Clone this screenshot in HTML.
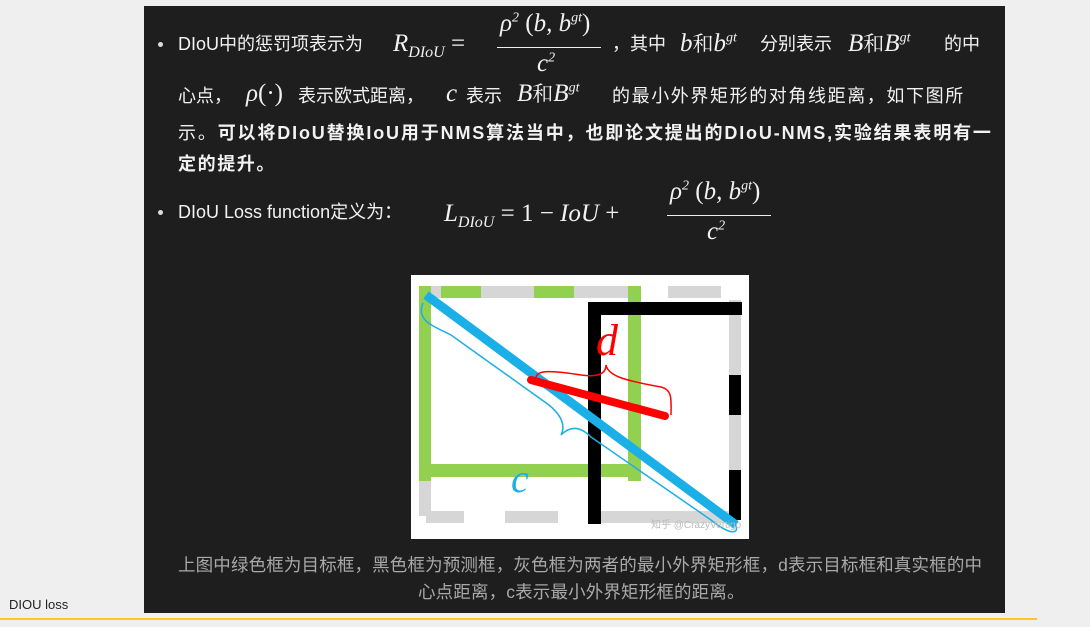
<!DOCTYPE html>
<html><head><meta charset="utf-8"><style>
body{margin:0;width:1090px;height:627px;background:#efefef;position:relative;overflow:hidden;font-family:"Liberation Sans","Noto Sans CJK SC",sans-serif;}
#p{position:absolute;left:144px;top:6px;width:861px;height:607px;background:#1e1e1e;}
.t{position:absolute;color:#f2f2f2;font-size:18px;white-space:nowrap;line-height:20px;}
.m{font-family:"Liberation Serif",serif;font-style:italic;font-size:25px;color:#f2f2f2;position:absolute;white-space:nowrap;}
.n{font-style:normal;}
.b{font-weight:bold;}
.dot{position:absolute;width:5px;height:5px;border-radius:50%;background:#ddd;}
.hr{position:absolute;height:1px;background:#eee;}
</style></head><body>
<div id="p"></div>
<div class="dot" style="left:158px;top:42px"></div>
<div class="t" style="left:178px;top:34px">DIoU中的惩罚项表示为</div>
<div class="m" style="left:393px;top:30px">R<sub style="font-size:16px">DIoU</sub> <span class="n">=</span></div>
<div class="m" style="left:500px;top:10px">ρ<sup style="font-size:14px">2</sup> <span class="n">(</span>b, b<sup style="font-size:14px">gt</sup><span class="n">)</span></div>
<div class="hr" style="left:497px;top:47px;width:104px"></div>
<div class="m" style="left:537px;top:50px">c<sup style="font-size:14px">2</sup></div>
<div class="t" style="left:612px;top:34px">，其中</div>
<div class="m" style="left:680px;top:28px">b<span class="n" style="font-family:'Noto Serif CJK SC';font-size:21px">和</span>b<sup style="font-size:14px">gt</sup></div>
<div class="t" style="left:760px;top:34px">分别表示</div>
<div class="m" style="left:848px;top:28px">B<span class="n" style="font-family:'Noto Serif CJK SC';font-size:21px">和</span>B<sup style="font-size:14px">gt</sup></div>
<div class="t" style="left:944px;top:34px">的中</div>
<div class="t" style="left:178px;top:86px">心点，</div>
<div class="m" style="left:246px;top:80px">ρ<span class="n">(·)</span></div>
<div class="t" style="left:298px;top:86px">表示欧式距离，</div>
<div class="m" style="left:446px;top:80px">c</div>
<div class="t" style="left:466px;top:86px">表示</div>
<div class="m" style="left:517px;top:78px">B<span class="n" style="font-family:'Noto Serif CJK SC';font-size:21px">和</span>B<sup style="font-size:14px">gt</sup></div>
<div class="t" style="left:612px;top:86px;letter-spacing:1.6px">的最小外界矩形的对角线距离，如下图所</div>
<div class="t" style="left:178px;top:123px;letter-spacing:1.85px">示。<span class="b">可以将DIoU替换IoU用于NMS算法当中，也即论文提出的DIoU-NMS,实验结果表明有一</span></div>
<div class="t b" style="left:178px;top:154px;letter-spacing:1.6px">定的提升。</div>
<div class="dot" style="left:158px;top:210px"></div>
<div class="t" style="left:178px;top:202px">DIoU Loss function定义为：</div>
<div class="m" style="left:444px;top:200px">L<sub style="font-size:16px">DIoU</sub> <span class="n">= 1 −</span> IoU <span class="n">+</span></div>
<div class="m" style="left:670px;top:178px">ρ<sup style="font-size:14px">2</sup> <span class="n">(</span>b, b<sup style="font-size:14px">gt</sup><span class="n">)</span></div>
<div class="hr" style="left:667px;top:215px;width:104px"></div>
<div class="m" style="left:707px;top:218px">c<sup style="font-size:14px">2</sup></div>
<svg style="position:absolute;left:411px;top:275px" width="338" height="264" viewBox="0 0 338 264">
<rect width="338" height="264" fill="#fff"/>
<g fill="#d6d6d6"><rect x="8" y="11" width="212" height="12"/><rect x="257" y="11" width="53" height="12"/><rect x="8" y="11" width="12" height="230"/><rect x="15" y="236" width="38" height="12"/><rect x="94" y="236" width="53" height="12"/><rect x="187" y="236" width="140" height="12"/><rect x="318" y="25" width="12" height="220"/></g>
<g fill="#92d050"><rect x="8" y="11" width="12" height="195"/><rect x="30" y="11" width="40" height="12"/><rect x="123" y="11" width="40" height="12"/><rect x="217" y="11" width="13" height="195"/><rect x="8" y="189" width="222" height="13"/></g>
<g fill="#000"><rect x="178" y="27" width="153" height="13"/><rect x="177" y="27" width="13" height="222"/><rect x="318" y="100" width="12" height="40"/><rect x="318" y="195" width="12" height="50"/></g>
<line x1="15" y1="20" x2="325" y2="250" stroke="#1aafe6" stroke-width="9"/>
<path d="M12 28 C5 45 20 50 40 60 L138 130 C150 140 155 150 150 160 C160 150 170 152 180 162 L300 245 C325 265 330 255 322 247" fill="none" stroke="#1aafe6" stroke-width="1.5"/>
<text x="100" y="217" font-family="Liberation Serif" font-style="italic" font-size="40" fill="#1aafe6">c</text>
<line x1="120" y1="105" x2="254" y2="141" stroke="#f00" stroke-width="8" stroke-linecap="round"/>
<path d="M125 103 C125 95 140 95 170 100 C185 102 195 100 195 90 C197 100 210 105 250 112 C262 115 260 125 260 140" fill="none" stroke="#f00" stroke-width="1.5"/>
<text x="185" y="80" font-family="Liberation Serif" font-style="italic" font-size="44" fill="#f00">d</text>
<text x="240" y="253" font-family="Liberation Sans" font-size="10" fill="#bbb">知乎 @CrazyVertigo</text>
</svg>
<div class="t" style="left:178px;top:555px;color:#a9a9a9;font-size:17.5px;letter-spacing:0.15px">上图中绿色框为目标框，黑色框为预测框，灰色框为两者的最小外界矩形框，d表示目标框和真实框的中</div>
<div class="t" style="left:418px;top:582px;color:#a9a9a9;font-size:17.5px;letter-spacing:0.15px">心点距离，c表示最小外界矩形框的距离。</div>
<div style="position:absolute;left:9px;top:597px;font-size:13px;color:#222">DIOU loss</div>
<div style="position:absolute;left:0;top:618px;width:1037px;height:2px;background:#fbc531"></div>
</body></html>
